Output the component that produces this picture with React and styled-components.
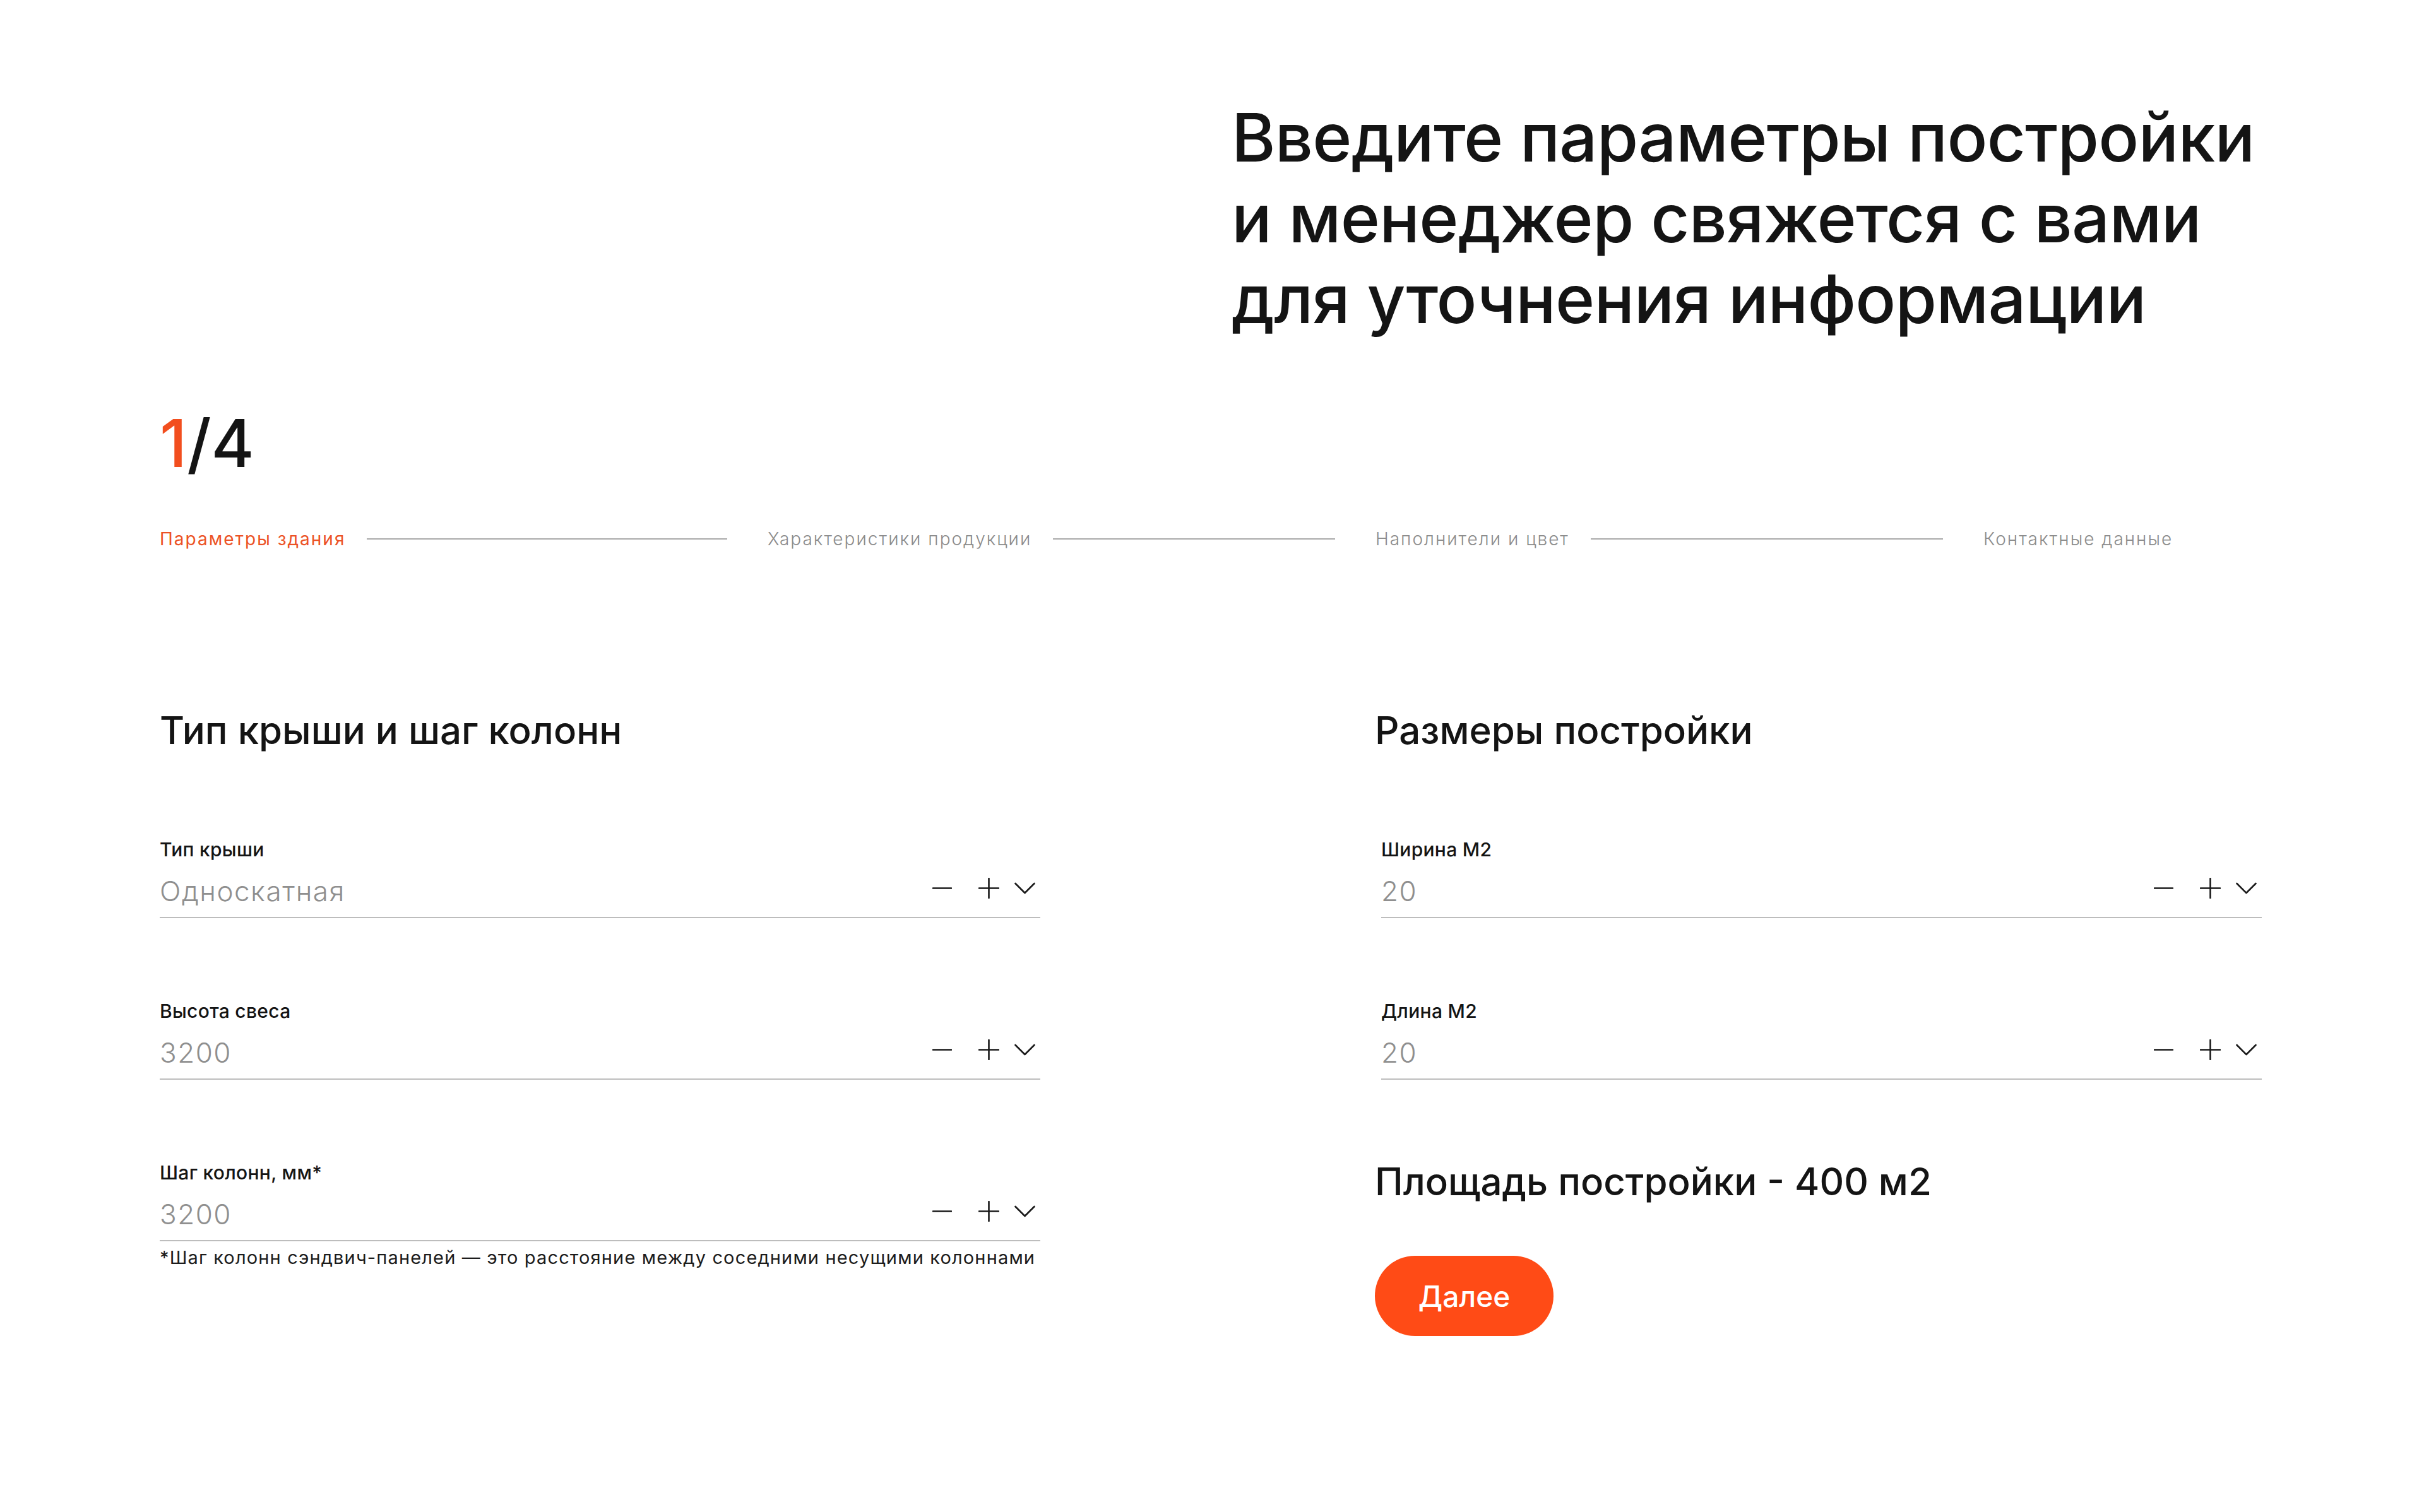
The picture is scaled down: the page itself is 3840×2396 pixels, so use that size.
import React from "react";
import styled, { createGlobalStyle } from "styled-components";

const GlobalStyle = createGlobalStyle`
  html, body {
    margin: 0;
    padding: 0;
    background: #ffffff;
  }
  body {
    font-family: Inter, "Noto Sans", sans-serif;
    color: #151515;
  }
  * {
    box-sizing: border-box;
  }
`;

const steps = [
  "Параметры здания",
  "Характеристики продукции",
  "Наполнители и цвет",
  "Контактные данные",
];

const leftFields = [
  { label: "Тип крыши", value: "Односкатная" },
  { label: "Высота свеса", value: "3200" },
  { label: "Шаг колонн, мм*", value: "3200" },
];

const rightFields = [
  { label: "Ширина М2", value: "20" },
  { label: "Длина М2", value: "20" },
];

function MinusIcon() {
  return (
    <svg width="31" height="33" viewBox="0 0 31 33">
      <line x1="1" y1="16.5" x2="30" y2="16.5" stroke="#1a1a1a" strokeWidth="2.6" strokeLinecap="round" />
    </svg>
  );
}

function PlusIcon() {
  return (
    <svg width="33" height="33" viewBox="0 0 33 33">
      <line x1="1" y1="16.5" x2="32" y2="16.5" stroke="#1a1a1a" strokeWidth="2.6" strokeLinecap="round" />
      <line x1="16.5" y1="1" x2="16.5" y2="32" stroke="#1a1a1a" strokeWidth="2.6" strokeLinecap="round" />
    </svg>
  );
}

function ChevronIcon() {
  return (
    <svg width="33" height="33" viewBox="0 0 33 33">
      <polyline points="1.5,9 16.5,24 31.5,9" fill="none" stroke="#1a1a1a" strokeWidth="2.6" strokeLinecap="round" strokeLinejoin="round" />
    </svg>
  );
}

function Field({ label, value }) {
  return (
    <div>
      <FieldLabel>{label}</FieldLabel>
      <FieldRow>
        <Value>{value}</Value>
        <Controls>
          <IconButton $space={18}>
            <MinusIcon />
          </IconButton>
          <IconButton>
            <PlusIcon />
          </IconButton>
          <IconButton>
            <ChevronIcon />
          </IconButton>
        </Controls>
      </FieldRow>
    </div>
  );
}

function App() {
  return (
    <Page>
      <GlobalStyle />
      <Title>
        Введите параметры постройки
        <br />
        и менеджер свяжется с вами
        <br />
        для уточнения информации
      </Title>

      <Counter>
        <span>1</span>/4
      </Counter>

      <Stepper>
        {steps.map((s, i) => (
          <Step key={s} $last={i === steps.length - 1}>
            <StepLabel $active={i === 0}>{s}</StepLabel>
            {i < steps.length - 1 && <StepLine />}
          </Step>
        ))}
      </Stepper>

      <Columns>
        <Column>
          <SectionTitle>Тип крыши и шаг колонн</SectionTitle>
          <Fields>
            {leftFields.map((f) => (
              <Field key={f.label} label={f.label} value={f.value} />
            ))}
          </Fields>
          <Note>
            *Шаг колонн сэндвич-панелей — это расстояние между соседними несущими колоннами
          </Note>
        </Column>

        <Column>
          <SectionTitle>Размеры постройки</SectionTitle>
          <Fields $indent={10}>
            {rightFields.map((f) => (
              <Field key={f.label} label={f.label} value={f.value} />
            ))}
          </Fields>
          <SectionTitle $top={125}>Площадь постройки - 400 м2</SectionTitle>
          <NextButton>Далее</NextButton>
        </Column>
      </Columns>
    </Page>
  );
}

export default App;

const Page = styled.div`
  padding: 154px 253px 200px 253px;
  min-height: 2396px;
  background: #ffffff;
`;

const Title = styled.h1`
  margin: 0 0 0 1698px;
  font-size: 106px;
  line-height: 128px;
  font-weight: 500;
  letter-spacing: -0.8px;
  color: #141414;
  white-space: nowrap;
`;

const Counter = styled.div`
  margin-top: 112px;
  font-size: 104px;
  line-height: 104px;
  font-weight: 500;
  color: #141414;
  span {
    color: #f24e1e;
  }
`;

const Stepper = styled.div`
  margin-top: 84px;
  display: grid;
  grid-template-columns: repeat(3, 963px) auto;
`;

const Step = styled.div`
  display: flex;
  align-items: center;
  gap: 34px;
  padding-right: ${(p) => (p.$last ? "0" : "64px")};
`;

const StepLabel = styled.div`
  font-size: 28px;
  line-height: 32px;
  font-weight: ${(p) => (p.$active ? 400 : 300)};
  letter-spacing: 2px;
  color: ${(p) => (p.$active ? "#ec5225" : "#8c8c8c")};
  white-space: nowrap;
`;

const StepLine = styled.div`
  flex: 1;
  height: 2px;
  background: #a9a9a9;
`;

const Columns = styled.div`
  margin-top: 251px;
  display: grid;
  grid-template-columns: 1395px 1405px;
  column-gap: 530px;
`;

const Column = styled.div`
  display: flex;
  flex-direction: column;
`;

const SectionTitle = styled.h2`
  margin: ${(p) => p.$top || 0}px 0 0 0;
  font-size: 60px;
  line-height: 72px;
  font-weight: 500;
  color: #141414;
  white-space: nowrap;
`;

const Fields = styled.div`
  display: flex;
  flex-direction: column;
  gap: 129px;
  margin-top: 135px;
  margin-left: ${(p) => p.$indent || 0}px;
`;

const FieldLabel = styled.div`
  font-size: 30px;
  line-height: 36px;
  font-weight: 500;
  letter-spacing: 0.3px;
  color: #141414;
`;

const FieldRow = styled.div`
  display: flex;
  align-items: center;
  margin-top: 22px;
  padding-bottom: 15px;
  border-bottom: 2px solid #bdbdbd;
`;

const Value = styled.div`
  flex: 1;
  font-size: 44px;
  line-height: 52px;
  font-weight: 300;
  letter-spacing: 1.5px;
  color: #8f8f8f;
`;

const Controls = styled.div`
  display: flex;
  align-items: center;
  gap: 24px;
  margin-right: 8px;
  margin-bottom: 10px;
`;

const IconButton = styled.span`
  display: flex;
  margin-right: ${(p) => p.$space || 0}px;
  cursor: pointer;
`;

const Note = styled.div`
  margin-top: 9px;
  font-size: 29px;
  line-height: 34px;
  font-weight: 400;
  letter-spacing: 1.15px;
  color: #1c1c1c;
  white-space: nowrap;
`;

const NextButton = styled.button`
  align-self: flex-start;
  margin-top: 82px;
  width: 283px;
  height: 127px;
  border: none;
  border-radius: 64px;
  background: #ff4b16;
  color: #ffffff;
  font-family: Inter, "Noto Sans", sans-serif;
  font-size: 46px;
  font-weight: 500;
  cursor: pointer;
`;
